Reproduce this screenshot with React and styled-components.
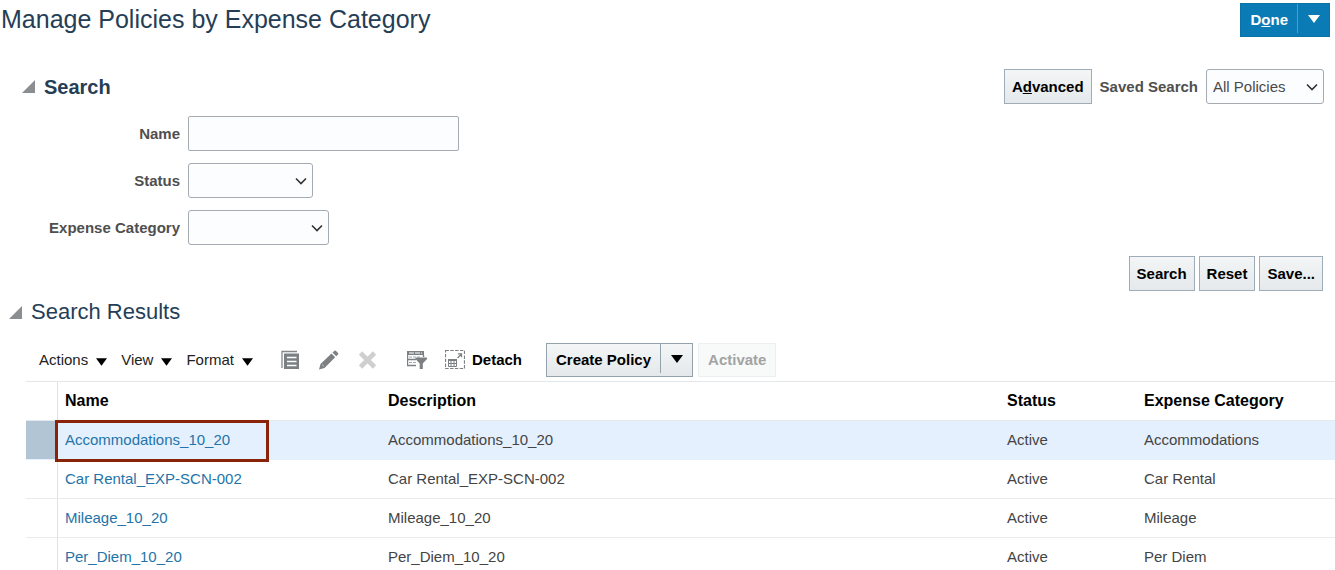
import React, { useState } from "react";
import styled, { createGlobalStyle } from "styled-components";

const GlobalStyle = createGlobalStyle`
  *, *::before, *::after {
    box-sizing: border-box;
  }
  body {
    margin: 0;
    overflow: hidden;
    background: #fff;
    color: #333;
    font-family: "Liberation Sans", Arial, sans-serif;
    font-size: 15px;
    line-height: 18px;
  }
  button, input, select {
    font: inherit;
    margin: 0;
  }
  svg {
    display: block;
  }
`;

const TopBar = styled.header`
  display: flex;
  align-items: flex-start;
  justify-content: space-between;
  padding: 3px 5px 0 1px;
`;
const PageTitle = styled.h1`
  margin: 0;
  font-size: 25px;
  font-weight: normal;
  line-height: 32px;
  color: #253e56;
`;
const SplitButton = styled.div`
  display: flex;
  height: 34px;
  color: ${props => (props.$primary ? "#fff" : "#000")};
  background: ${props =>
    props.$primary ? "#0b7bb5" : "linear-gradient(#f4f6f7, #e4e8ea)"};
  border: 1px solid ${props => (props.$primary ? "#0b72a8" : "#94a3ab")};
`;
const SplitMain = styled.button`
  padding: 0 9px;
  border: 0;
  background: none;
  color: inherit;
  font-weight: bold;
`;
const SplitArrow = styled.button`
  display: flex;
  align-items: center;
  justify-content: center;
  width: 32px;
  height: 29px;
  padding: 0;
  border: 0;
  border-left: 1px solid ${props => (props.$primary ? "#4aa0cb" : "#94a3ab")};
  background: none;
  color: inherit;
`;

const SearchPanel = styled.section`
  padding: 32px 11px 0 22px;
`;
const PanelHeader = styled.div`
  display: flex;
  align-items: center;
  justify-content: space-between;
  margin-bottom: 12px;
`;
const Disclosure = styled.button`
  display: flex;
  align-items: center;
  gap: 9px;
  padding: 0;
  border: 0;
  background: none;
  color: #253e56;
  text-align: left;
`;
const PanelTitle = styled.h2`
  margin: 0;
  font-size: 20px;
  line-height: 24px;
`;
const ResultsTitle = styled.h2`
  margin: 0;
  font-size: 22px;
  font-weight: normal;
  line-height: 26px;
`;
const SavedSearch = styled.div`
  display: flex;
  align-items: center;
`;
const Label = styled.label`
  padding: 0 8px;
  font-weight: bold;
  color: #4f4f4f;
  text-align: right;
`;
const Button = styled.button`
  height: 35px;
  padding: 0 7px;
  border: 1px solid #9fadb8;
  background: linear-gradient(#f3f5f6, #e5e9eb);
  color: #000;
  font-weight: bold;
  &:disabled {
    height: 34px;
    padding: 0 9px;
    border-color: #eceff0;
    background: #f8fafa;
    color: #a3a3a3;
  }
`;
const Fields = styled.div`
  display: grid;
  grid-template-columns: 166px 1fr;
  row-gap: 12px;
  align-items: center;
`;
const TextInput = styled.input`
  width: 271px;
  height: 35px;
  padding: 0 6px;
  border: 1px solid #a5abb0;
  border-radius: 2px;
  background: #fbfdff;
`;
const SelectBox = styled.div`
  position: relative;
  width: ${props => props.$width}px;
  > svg {
    position: absolute;
    top: 12px;
    right: 6px;
    pointer-events: none;
  }
`;
const Select = styled.select`
  appearance: none;
  width: 100%;
  height: 35px;
  padding: 0 24px 0 6px;
  border: 1px solid #a5abb0;
  border-radius: 3px;
  background: #fbfdff;
  color: #4a4a4a;
`;
const FormActions = styled.div`
  display: flex;
  justify-content: flex-end;
  gap: 4px;
  padding: 11px 1px 0 0;
`;

const Results = styled.section`
  padding: 8px 0 0 9px;
`;
const Toolbar = styled.div`
  display: flex;
  align-items: center;
  margin: 18px 0 4px 30px;
`;
const MenuButton = styled.button`
  display: flex;
  align-items: center;
  gap: 8px;
  margin-right: 14px;
  padding: 0;
  border: 0;
  background: none;
  color: #222;
  > svg {
    margin-top: 4px;
    color: #000;
  }
`;
const IconGroup = styled.div`
  display: flex;
  align-items: center;
  gap: 18px;
  margin: 0 24px 0 14px;
`;
const IconButton = styled.button`
  display: flex;
  align-items: center;
  gap: 7px;
  padding: 0;
  border: 0;
  background: none;
  color: #000;
  font-weight: bold;
`;
const QueryButton = styled(IconButton)`
  margin-left: 12px;
`;
const ToolbarButtons = styled.div`
  display: flex;
  gap: 5px;
`;

const Table = styled.table`
  width: 100%;
  table-layout: fixed;
  border-collapse: separate;
  border-spacing: 0;
  border-top: 1px solid #e3e7e9;
`;
const TableWrap = styled.div`
  padding-left: 17px;
`;
const HeadCell = styled.th`
  height: 39px;
  padding: 0 7px;
  border-bottom: 1px solid #e3e9ee;
  color: #000;
  font-size: 16px;
  text-align: left;
`;
const Cell = styled.td`
  position: relative;
  height: 39px;
  padding: 0 7px;
  border-bottom: 1px solid #e8ecee;
  color: #444;
`;
const Row = styled.tr`
  > td {
    background: ${props => (props.$selected ? "#e4f0fe" : "#fff")};
    border-color: ${props => (props.$selected ? "#e4f0fe" : "#e8ecee")};
  }
`;
const RowHandle = styled.td`
  border-right: 1px solid #dce2e5;
  border-bottom: 1px solid #e8ecee;
  ${Row} > && {
    background: ${props => (props.$selected ? "#b2c5d4" : "#fff")};
    border-right-color: #dce2e5;
  }
`;
const HandleHead = styled.td`
  border-right: 1px solid #dce2e5;
  border-bottom: 1px solid #e3e9ee;
`;
const PolicyLink = styled.a`
  color: #2474a8;
  text-decoration: none;
  &:hover {
    text-decoration: underline;
  }
`;
// Frame drawn over the cell edges
const Highlight = styled.span`
  position: absolute;
  z-index: 1;
  top: -1px;
  left: -3px;
  width: 214px;
  height: 42px;
  border: 3px solid #8a2408;
  pointer-events: none;
`;

const Triangle = () => (
  <svg width="13" height="13" viewBox="0 0 13 13" aria-hidden="true">
    <path d="M13 0V13H0Z" fill="#8b8e90" />
  </svg>
);

const DownArrow = ({ width = 12, height = 8 }) => (
  <svg width={width} height={height} viewBox="0 0 12 8" aria-hidden="true">
    <path d="M0 0H12L6 8Z" fill="currentColor" />
  </svg>
);

const Chevron = () => (
  <svg width="12" height="12" viewBox="0 0 12 12" aria-hidden="true">
    <path d="M1 3.5L6 8.5L11 3.5" fill="none" stroke="#333" strokeWidth="1.6" />
  </svg>
);

const DuplicateIcon = () => (
  <svg width="20" height="20" viewBox="0 0 20 20" aria-hidden="true">
    <path d="M1 18V1.5H16" fill="none" stroke="#84888b" strokeWidth="1.3" />
    <path d="M3 3.5H18V19H3Z" fill="#7c8083" />
    <path d="M6 7.5H15.5M6 11.5H15.5M6 15.5H15.5" stroke="#fff" strokeWidth="1.4" />
  </svg>
);

const EditIcon = () => (
  <svg width="20" height="20" viewBox="0 0 20 20" aria-hidden="true">
    <path d="M0 19.5L1.5 14L12.5 3.6L16.2 7.3L5.5 18Z" fill="#7c8083" />
    <path d="M13.5 2.6L15.5 0.7Q16.2 0.1 16.8 0.7L19 3Q19.7 3.7 19 4.4L17.2 6.3Z" fill="#7c8083" />
    <path d="M3.2 14.6L5 16.4" stroke="#d8dadb" strokeWidth="0.8" />
  </svg>
);

const DeleteIcon = () => (
  <svg width="20" height="20" viewBox="0 0 20 20" aria-hidden="true">
    <path d="M3.5 3L17.5 17M17.5 3L3.5 17" stroke="#cdcfd0" strokeWidth="4.6" />
  </svg>
);

const QueryIcon = () => (
  <svg width="20" height="20" viewBox="0 0 20 20" aria-hidden="true">
    <path d="M0 1H17V5H0Z" fill="#7c8083" />
    <path d="M2 3H15" stroke="#fff" strokeDasharray="5 1" />
    <path
      d="M0.5 5V15.5H9M16.5 5V7M0 9.5H9"
      fill="none"
      stroke="#7c8083"
      strokeWidth="1.4"
    />
    <path d="M2 7H13M2 12.5H9" stroke="#a4a7a9" strokeDasharray="3 1" />
    <path d="M8.5 7.5H20V9L15.8 13.5V19H12.7V13.5L8.5 9Z" fill="#7c8083" />
  </svg>
);

const DetachIcon = () => (
  <svg width="20" height="20" viewBox="0 0 20 20" aria-hidden="true">
    <path
      d="M0.5 0.5H19.5V18.5H0.5Z"
      fill="none"
      stroke="#7c8083"
      strokeWidth="1.2"
      strokeDasharray="3.4 1.4"
    />
    <path d="M3 9H12V11H3Z" fill="#7c8083" />
    <path
      d="M3.5 10V16.5H11.5V10M3 13.5H12M6 11V16M9 11V16"
      fill="none"
      stroke="#7c8083"
    />
    <path d="M12.5 8L16 4.5M13 3.8H16.5V7.3" fill="none" stroke="#7c8083" strokeWidth="1.3" />
  </svg>
);

const policies = [
  { name: "Accommodations_10_20", status: "Active", category: "Accommodations" },
  { name: "Car Rental_EXP-SCN-002", status: "Active", category: "Car Rental" },
  { name: "Mileage_10_20", status: "Active", category: "Mileage" },
  { name: "Per_Diem_10_20", status: "Active", category: "Per Diem" }
];

const menus = ["Actions", "View", "Format"];

function SearchSection() {
  return (
    <SearchPanel>
      <PanelHeader>
        <Disclosure type="button" aria-expanded="true">
          <Triangle />
          <PanelTitle>Search</PanelTitle>
        </Disclosure>
        <SavedSearch>
          <Button type="button">
            A<u>d</u>vanced
          </Button>
          <Label htmlFor="saved">Saved Search</Label>
          <SelectBox $width={118}>
            <Select id="saved" defaultValue="all">
              <option value="all">All Policies</option>
            </Select>
            <Chevron />
          </SelectBox>
        </SavedSearch>
      </PanelHeader>
      <form onSubmit={e => e.preventDefault()}>
        <Fields>
          <Label htmlFor="name">Name</Label>
          <TextInput id="name" type="text" />
          <Label htmlFor="status">Status</Label>
          <SelectBox $width={125}>
            <Select id="status" defaultValue="">
              <option value="" />
            </Select>
            <Chevron />
          </SelectBox>
          <Label htmlFor="category">Expense Category</Label>
          <SelectBox $width={141}>
            <Select id="category" defaultValue="">
              <option value="" />
            </Select>
            <Chevron />
          </SelectBox>
        </Fields>
        <FormActions>
          <Button type="submit">Search</Button>
          <Button type="reset">Reset</Button>
          <Button type="button">Save...</Button>
        </FormActions>
      </form>
    </SearchPanel>
  );
}

function ResultsToolbar() {
  return (
    <Toolbar>
      {menus.map(d => (
        <MenuButton key={d} type="button">
          {d}
          <DownArrow width={11} />
        </MenuButton>
      ))}
      <IconGroup>
        <IconButton type="button" aria-label="Duplicate">
          <DuplicateIcon />
        </IconButton>
        <IconButton type="button" aria-label="Edit">
          <EditIcon />
        </IconButton>
        <IconButton type="button" aria-label="Delete" disabled>
          <DeleteIcon />
        </IconButton>
        <QueryButton type="button" aria-label="Query by Example">
          <QueryIcon />
        </QueryButton>
        <IconButton type="button">
          <DetachIcon />
          Detach
        </IconButton>
      </IconGroup>
      <ToolbarButtons>
        <SplitButton>
          <SplitMain type="button">Create Policy</SplitMain>
          <SplitArrow type="button" aria-label="More create options">
            <DownArrow />
          </SplitArrow>
        </SplitButton>
        <Button type="button" disabled>
          Activate
        </Button>
      </ToolbarButtons>
    </Toolbar>
  );
}

function PolicyTable() {
  const [selected, setSelected] = useState(0);

  return (
    <TableWrap>
      <Table>
        <colgroup>
          <col style={{ width: 32 }} />
          <col style={{ width: 323 }} />
          <col />
          <col style={{ width: 137 }} />
          <col style={{ width: 198 }} />
        </colgroup>
        <thead>
          <tr>
            <HandleHead />
            <HeadCell scope="col">Name</HeadCell>
            <HeadCell scope="col">Description</HeadCell>
            <HeadCell scope="col">Status</HeadCell>
            <HeadCell scope="col">Expense Category</HeadCell>
          </tr>
        </thead>
        <tbody>
          {policies.map((d, i) => (
            <Row key={d.name} $selected={i === selected} onClick={() => setSelected(i)}>
              <RowHandle $selected={i === selected} />
              <Cell>
                <PolicyLink href="#">{d.name}</PolicyLink>
                {i === 0 && <Highlight />}
              </Cell>
              <Cell>{d.name}</Cell>
              <Cell>{d.status}</Cell>
              <Cell>{d.category}</Cell>
            </Row>
          ))}
        </tbody>
      </Table>
    </TableWrap>
  );
}

export default function App() {
  return (
    <main>
      <GlobalStyle />
      <TopBar>
        <PageTitle>Manage Policies by Expense Category</PageTitle>
        <SplitButton $primary>
          <SplitMain type="button">
            D<u>o</u>ne
          </SplitMain>
          <SplitArrow type="button" $primary aria-label="More done options">
            <DownArrow />
          </SplitArrow>
        </SplitButton>
      </TopBar>
      <SearchSection />
      <Results>
        <Disclosure type="button" aria-expanded="true">
          <Triangle />
          <ResultsTitle>Search Results</ResultsTitle>
        </Disclosure>
        <ResultsToolbar />
        <PolicyTable />
      </Results>
    </main>
  );
}
